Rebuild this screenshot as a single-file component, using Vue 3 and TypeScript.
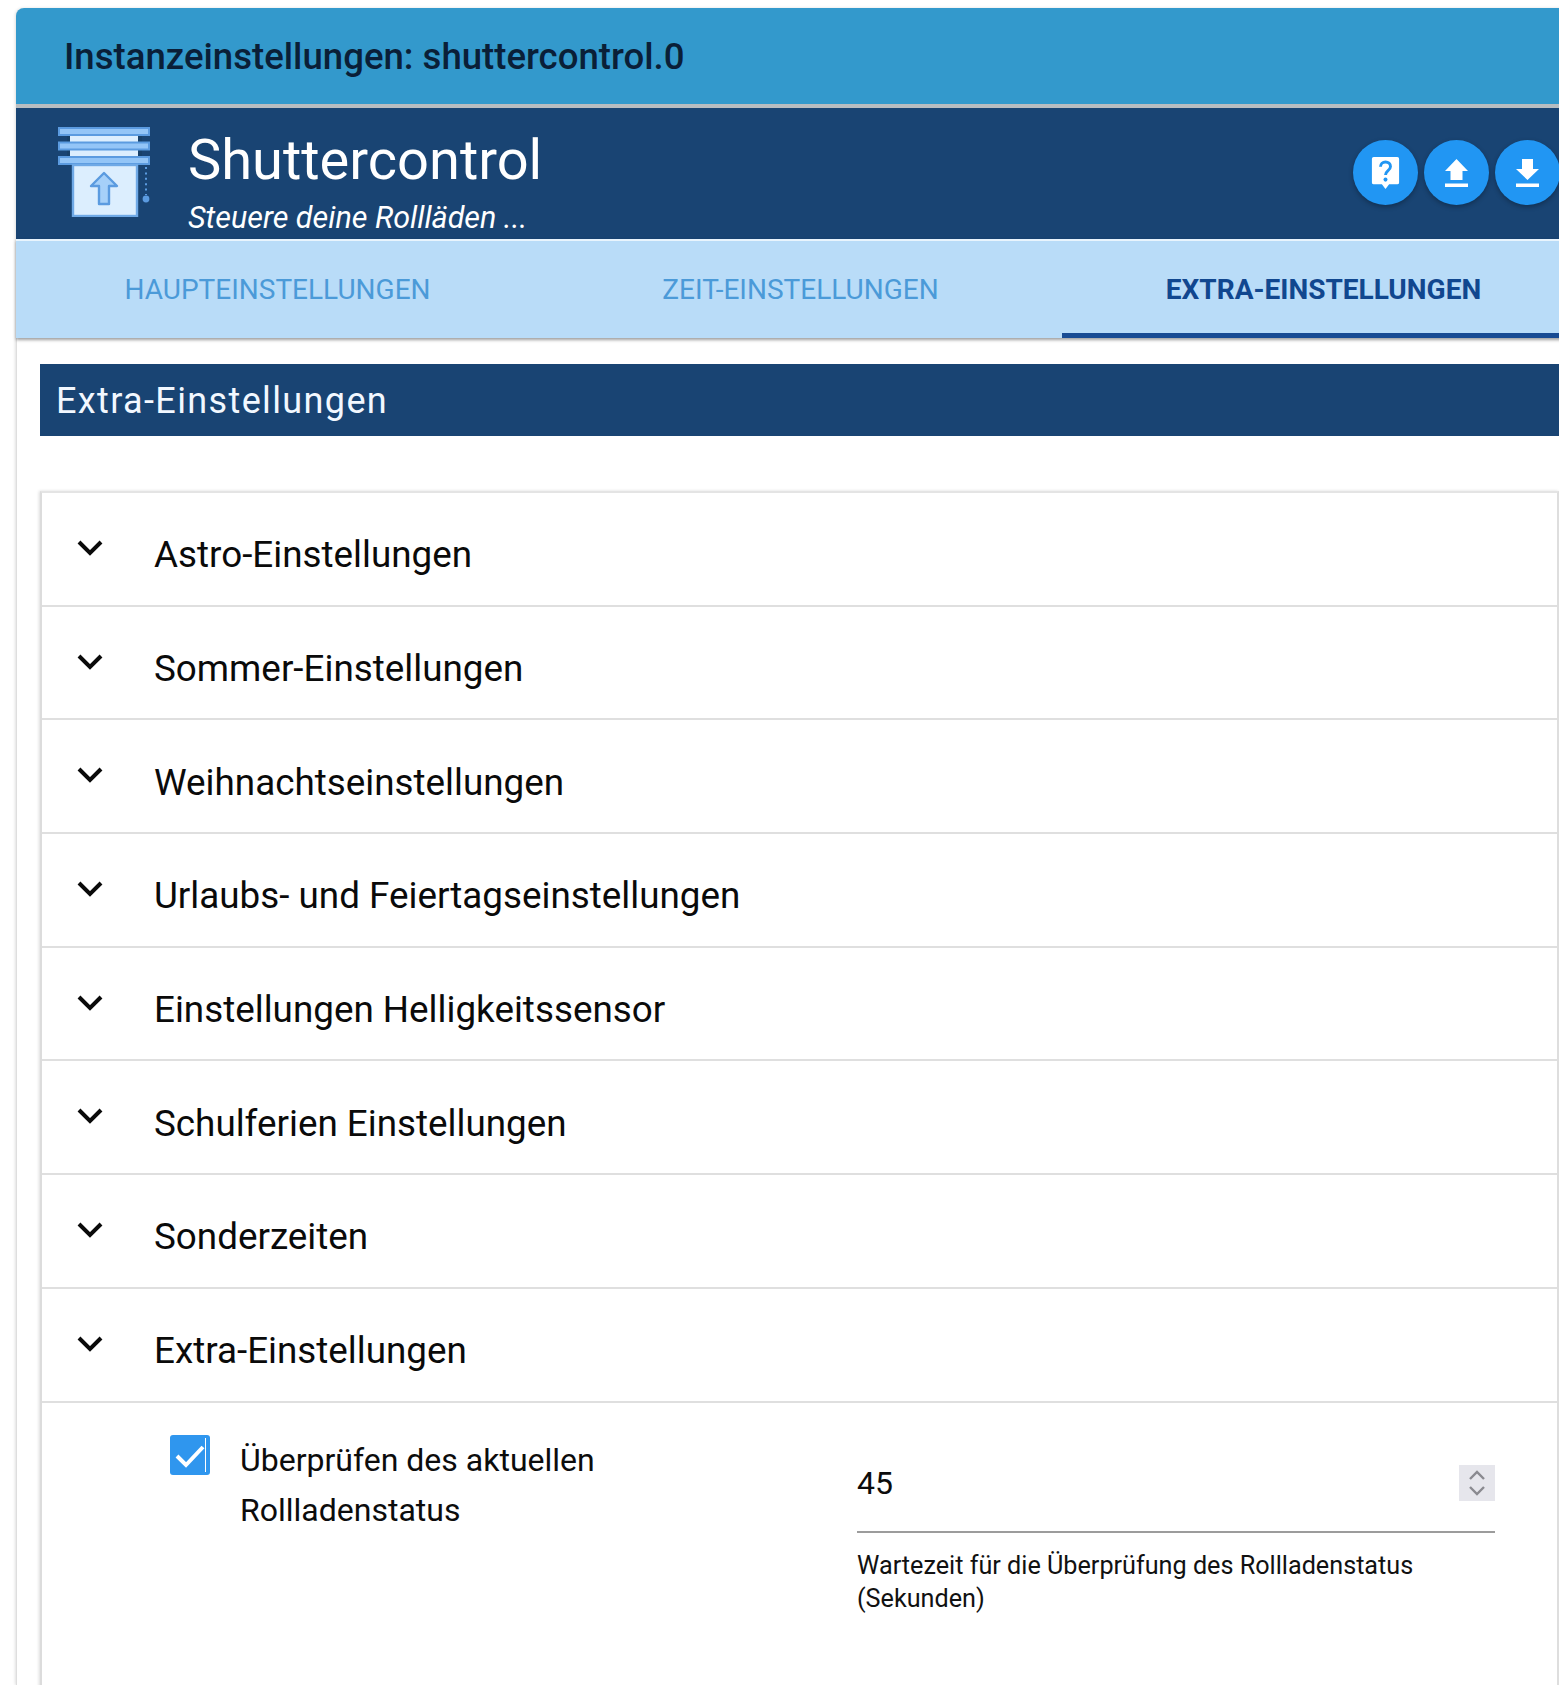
<script setup lang="ts">
const tabs: { label: string; active?: boolean }[] = [
  { label: 'Haupteinstellungen' },
  { label: 'Zeit-Einstellungen' },
  { label: 'Extra-Einstellungen', active: true },
]
const rows: string[] = [
  'Astro-Einstellungen',
  'Sommer-Einstellungen',
  'Weihnachtseinstellungen',
  'Urlaubs- und Feiertagseinstellungen',
  'Einstellungen Helligkeitssensor',
  'Schulferien Einstellungen',
  'Sonderzeiten',
  'Extra-Einstellungen',
]
</script>

<template>
  <div class="page">
    <div class="dialog">
      <header class="title-bar">Instanzeinstellungen: shuttercontrol.0</header>

      <section class="brand">
        <svg class="logo" viewBox="0 0 92 90" aria-hidden="true">
          <rect x="9" y="8" width="75" height="22" fill="#174069" />
          <rect x="12" y="9" width="68" height="6" fill="#dceefe" />
          <rect x="12" y="23" width="68" height="6" fill="#dceefe" />
          <rect x="1" y="1" width="90" height="7" fill="#93c5f7" stroke="#5b9be0" stroke-width="2" />
          <rect x="1" y="15.500" width="90" height="7" fill="#93c5f7" stroke="#5b9be0" stroke-width="2" />
          <rect x="1" y="30" width="90" height="7" fill="#93c5f7" stroke="#5b9be0" stroke-width="2" />
          <rect x="15" y="38" width="64" height="51" fill="#dceefe" stroke="#6fa9e6" stroke-width="2.400" />
          <path d="M46 46 L59 59 L51 59 L51 77 L41 77 L41 59 L33 59 Z" fill="#a6d0f9" stroke="#5b9be0" stroke-width="2.400" stroke-linejoin="round" />
          <path d="M88 40 V68" stroke="#5b9be0" stroke-width="2" stroke-dasharray="2 3.400" />
          <circle cx="88" cy="72" r="3.400" fill="#5b9be0" />
        </svg>
        <div class="brand-text">
          <h1>Shuttercontrol</h1>
          <p>Steuere deine Rollläden ...</p>
        </div>
        <div class="actions">
          <button class="fab" aria-label="Hilfe">
            <svg viewBox="0 0 32 36" width="29" height="34" preserveAspectRatio="none">
              <path fill="#fff" d="M3 1h26a2 2 0 0 1 2 2v25a2 2 0 0 1-2 2h-9l-4 5-4-5H3a2 2 0 0 1-2-2V3a2 2 0 0 1 2-2z" />
              <path fill="none" stroke="#2196f3" stroke-width="3.200" d="M10.500 11.500c0-3.200 2.400-5.200 5.500-5.200s5.500 2 5.500 4.800c0 4.300-5.500 4.400-5.500 8.900" />
              <circle cx="16" cy="25" r="2.200" fill="#2196f3" />
            </svg>
          </button>
          <button class="fab" aria-label="Hochladen">
            <svg viewBox="0 0 23 28" width="23" height="28"><path fill="#fff" d="M11.500 0 L23 12 H17.500 V21 H5.500 V12 H0 Z M0 24.500 H23 V28 H0 Z" /></svg>
          </button>
          <button class="fab" aria-label="Herunterladen">
            <svg viewBox="0 0 23 28" width="23" height="28"><path fill="#fff" d="M6 0 H17 V10 H23 L11.500 21 L0 10 H6 Z M0 24.500 H23 V28 H0 Z" /></svg>
          </button>
        </div>
      </section>

      <nav class="tabs">
        <div v-for="tab in tabs" :key="tab.label" class="tab" :class="{ active: tab.active }">{{ tab.label }}</div>
      </nav>

      <main class="content">
        <h2 class="section">Extra-Einstellungen</h2>

        <div class="accordion">
          <div v-for="row in rows" :key="row" class="row">
            <svg class="chevron" viewBox="0 0 26 16" aria-hidden="true">
              <path d="M2 2 L13 13 L24 2" fill="none" stroke="#0a0a0a" stroke-width="4" />
            </svg>
            <span class="row-label">{{ row }}</span>
          </div>

          <div class="panel">
            <div class="check-col">
              <span class="checkbox">
                <svg viewBox="0 0 40 40" width="40" height="40" aria-hidden="true">
                  <path d="M7 21 L16 30 L33 12" fill="none" stroke="#fff" stroke-width="4" />
                  <path d="M35.500 3 V37" stroke="#fff" stroke-width="1" />
                </svg>
              </span>
              <span class="check-label">Überprüfen des aktuellen Rollladenstatus</span>
            </div>
            <div class="field-col">
              <div class="input">
                <span>45</span>
                <span class="spinner">
                  <svg viewBox="0 0 36 36" width="36" height="36" aria-hidden="true">
                    <path d="M11 14 L18 7 L25 14 M11 22 L18 29 L25 22" fill="none" stroke="#8a8a90" stroke-width="2.400" />
                  </svg>
                </span>
              </div>
              <p class="helper">Wartezeit für die Überprüfung des Rollladenstatus (Sekunden)</p>
            </div>
          </div>
        </div>
      </main>
    </div>
  </div>
</template>

<style>
html, body { margin: 0; background: #fff; overflow: hidden; }
</style>

<style scoped>
* { box-sizing: border-box; }
.page {
  width: 1559px;
  height: 1685px;
  overflow: hidden;
  padding: 8px 0 0 16px;
  font-family: Roboto, "Liberation Sans", sans-serif;
  background: #fff;
}
.dialog {
  width: 1570px;
  height: 1677px;
  border-left: 1px solid #dedede;
  box-shadow: -1px 0 3px rgba(0, 0, 0, 0.12);
  border-top-left-radius: 8px;
}
.title-bar {
  height: 96px;
  margin-left: -1px;
  display: flex;
  align-items: center;
  padding-left: 48px;
  background: #3399cc;
  color: #0a1f38;
  font-size: 36.600px;
  font-weight: 500;
  border-top-left-radius: 8px;
  box-shadow: 0 4px 0 #b8bdc1;
  position: relative;
}
.brand {
  margin: 4px 0 0 -1px;
  height: 131px;
  background: #194473;
  display: flex;
  align-items: flex-start;
  padding-left: 42px;
  position: relative;
}
.logo {
  width: 92px;
  height: 90px;
  margin-top: 19px;
  flex: none;
}
.brand-text { margin-left: 38px; color: #fff; }
.brand-text h1 {
  margin: 20px 0 0;
  font-size: 56px;
  line-height: 64px;
  font-weight: 400;
}
.brand-text p {
  margin: 8px 0 0;
  font-size: 30.500px;
  line-height: 36px;
  font-style: italic;
}
.actions {
  display: flex;
  gap: 6px;
  margin-left: auto;
  margin-right: 26px;
  margin-top: 32px;
  flex: none;
}
.fab {
  width: 65px;
  height: 65px;
  padding: 0;
  border: 0;
  border-radius: 50%;
  background: #2196f3;
  display: flex;
  align-items: center;
  justify-content: center;
  box-shadow: 0 2px 5px rgba(0, 0, 0, 0.3);
}
.tabs {
  margin: 0 0 0 -1px;
  height: 99px;
  border-top: 2px solid #e8f4fd;
  display: grid;
  grid-template-columns: repeat(3, 523px);
  background: #b9dcf8;
  box-shadow: 0 2px 3px rgba(0, 0, 0, 0.38);
  position: relative;
}
.tab {
  display: flex;
  align-items: center;
  justify-content: center;
  font-size: 28px;
  text-transform: uppercase;
  color: #4b9ad8;
}
.tab.active {
  color: #11478f;
  font-weight: 700;
  border-bottom: 5px solid #184b93;
  padding-top: 5px;
}
.content { padding: 26px 0 0 23px; }
.section {
  margin: 0;
  height: 72px;
  padding: 2px 0 0 16px;
  display: flex;
  align-items: center;
  background: #194473;
  color: #f2f8ff;
  font-size: 36px;
  font-weight: 400;
  letter-spacing: 1.370px;
}
.accordion {
  width: 1519px;
  margin-top: 55px;
  border-top: 2px solid #e4e4e4;
  border-left: 2px solid #dcdcdc;
  border-right: 2px solid #dedede;
  box-shadow: -1px 0 3px rgba(0, 0, 0, 0.14);
}
.row {
  height: 113.700px;
  display: flex;
  align-items: center;
  border-bottom: 2px solid #dfdfdf;
  color: #0a0a0a;
}
.chevron {
  width: 26px;
  height: 16px;
  margin: -2px 0 0 35px;
  flex: none;
}
.row-label {
  margin-left: 51px;
  padding-top: 12px;
  font-size: 36.800px;
}
.panel {
  display: grid;
  grid-template-columns: 815px 638px;
  height: 285px;
}
.check-col {
  display: flex;
  align-items: flex-start;
  padding: 32px 0 0 128px;
}
.checkbox {
  width: 40px;
  height: 40px;
  flex: none;
  border-radius: 3px;
  background: #2f96ee;
}
.check-label {
  margin-left: 30px;
  max-width: 400px;
  font-size: 32px;
  line-height: 50px;
  color: #0c0c0c;
}
.field-col { min-width: 0; }
.input {
  height: 130px;
  display: flex;
  align-items: center;
  justify-content: space-between;
  border-bottom: 2px solid #9c9c9c;
  font-size: 32px;
  color: #0c0c0c;
  padding-top: 33px;
}
.spinner {
  width: 36px;
  height: 36px;
  background: #e6e6ec;
  display: block;
}
.helper {
  margin: 16px 0 0;
  font-size: 25.200px;
  line-height: 33px;
  color: #111;
}
</style>
